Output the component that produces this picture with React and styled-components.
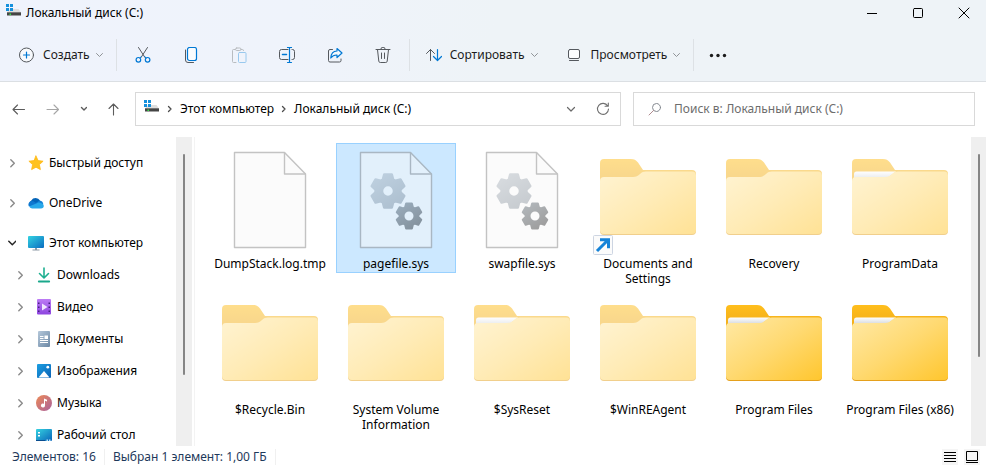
import React, { useState } from "react";
import styled, { createGlobalStyle } from "styled-components";

const GlobalStyle = createGlobalStyle`
  * {
    box-sizing: border-box;
  }
  body {
    margin: 0;
    background: #ffffff;
  }
  body, button, input {
    font-family: "Noto Sans", "Open Sans", sans-serif;
    font-size: 12px;
    line-height: 16px;
    color: #000000;
  }
  button {
    padding: 0;
    border: none;
    background: none;
  }
  svg {
    display: block;
    flex: none;
  }
`;

const Window = styled.div`
  display: flex;
  flex-direction: column;
  height: 100vh;
  overflow: hidden;
`;

const Header = styled.header`
  flex: none;
  background: linear-gradient(100deg, #eff3fc 0%, #eff3fb 30%, #eef3f7 50%);
  border-bottom: 1px solid #dbdfe3;
`;

const TitleBar = styled.div`
  display: flex;
  align-items: center;
  height: 26px;
  padding-left: 6px;
`;

const Title = styled.h1`
  flex: 1;
  margin: 0 0 0 4px;
  font-size: 12px;
  font-weight: 400;
  line-height: 16px;
`;

const WindowButton = styled.button`
  display: flex;
  justify-content: center;
  align-items: center;
  width: 46px;
  height: 24px;
  padding-left: 2px;
`;

const Toolbar = styled.div`
  display: flex;
  align-items: center;
  padding: 13px 0 10px;
`;

const MenuButton = styled.button`
  display: flex;
  align-items: center;
  height: 32px;
  padding: 0 13px 0 16px;
  gap: 6px;
  color: #1b1b1b;
`;

const MenuIcon = styled.span`
  margin-right: 2px;
`;

const ToolButton = styled.button`
  display: flex;
  justify-content: center;
  align-items: center;
  width: 48px;
  height: 32px;
`;

const ToolGroup = styled.div`
  display: flex;
  padding: 0 2px;
`;

const Separator = styled.div`
  width: 1px;
  height: 32px;
  background: #dde1e5;
`;

const NavRow = styled.div`
  display: grid;
  flex: none;
  grid-template-columns: 135px minmax(0, 27fr) 12px minmax(0, 19fr);
  align-items: center;
  padding: 10px 11px 11px 0;
`;

const NavButtons = styled.div`
  display: flex;
  justify-content: space-between;
  align-items: center;
  padding: 0 15px 0 12px;
`;

const NavButton = styled.button`
  display: flex;
  justify-content: center;
  align-items: center;
  height: 32px;
`;

const AddressBar = styled.div`
  display: flex;
  align-items: center;
  height: 34px;
  padding: 0 10px 0 8px;
  border: 1px solid #d9d9d9;
`;

const Crumbs = styled.div`
  display: flex;
  flex: 1;
  align-items: center;
  gap: 7px;
`;

const AddressButton = styled.button`
  display: flex;
  margin-left: 20px;
`;

const SearchBox = styled.label`
  display: flex;
  grid-column: 4;
  align-items: center;
  height: 34px;
  padding: 0 14px;
  gap: 12px;
  border: 1px solid #d9d9d9;
`;

const SearchInput = styled.input`
  flex: 1;
  min-width: 0;
  padding: 0;
  border: none;
  outline: none;
  background: none;
  &::placeholder {
    color: #6d6d6d;
    opacity: 1;
  }
`;

const Content = styled.div`
  display: flex;
  flex: 1;
  min-height: 0;
`;

const Sidebar = styled.nav`
  display: flex;
  flex: none;
  width: 195px;
  padding-right: 2px;
  border-right: 1px solid #f3f3f3;
`;

const TreeList = styled.ul`
  flex: 1;
  margin: 0;
  padding: 10px 0 0;
  overflow: hidden;
  list-style: none;
`;

const TreeItem = styled.li`
  margin-bottom: ${(props) => (props.$spaced ? "8px" : "0")};
`;

const TreeButton = styled.button`
  display: flex;
  align-items: center;
  width: 100%;
  height: 32px;
  padding-left: ${(props) => (props.$nested ? "16px" : "8px")};
`;

const TreeIcon = styled.span`
  margin: 0 5px 0 12px;
`;

const ScrollTrack = styled.div`
  flex: none;
  width: ${(props) => props.$width};
  padding: 17px 7px 0;
  background: #efefef;
`;

const ScrollThumb = styled.div`
  width: 2px;
  height: ${(props) => props.$length};
  border-radius: 1px;
  background: #858585;
`;

const FileGrid = styled.main`
  display: grid;
  flex: 1;
  grid-template-columns: repeat(auto-fill, 120px);
  grid-auto-rows: 146px;
  column-gap: 6px;
  align-items: start;
  padding: 6px 0 0 15px;
  overflow: hidden;
`;

const Tile = styled.button`
  display: flex;
  flex-direction: column;
  align-items: center;
  width: 120px;
  padding-bottom: 1px;
  border: 1px solid ${(props) => (props.$selected ? "#99d1ff" : "transparent")};
  background: ${(props) => (props.$selected ? "#cce8ff" : "transparent")};
`;

const TileLabel = styled.span`
  max-width: 112px;
  line-height: 15px;
  text-align: center;
`;

const TileSvg = styled.svg`
  overflow: visible;
`;

const StatusBar = styled.footer`
  display: flex;
  flex: none;
  align-items: center;
  height: 21px;
  padding: 0 6px 0 12px;
  color: #1e395b;
`;

const StatusText = styled.span`
  padding-right: 8px;
  margin-right: 8px;
  border-right: 1px solid #f0f0f0;
`;

const ViewButtons = styled.div`
  display: flex;
  margin-left: auto;
  gap: 6px;
`;

const ViewButton = styled.button`
  background: #f5f5f5;
`;

const DARK = "#55595e";
const BLUE = "#0078d4";

const Icon = ({ width = 16, height = 16, children }) => (
  <svg
    width={width}
    height={height}
    viewBox={`0 0 ${width} ${height}`}
    fill="none"
    strokeLinecap="round"
    strokeLinejoin="round"
    aria-hidden="true"
  >
    {children}
  </svg>
);

const DriveIcon = () => (
  <Icon height={18}>
    <path d="M1 8.500 4 5h8.500l2.500 3.500z" fill="#dedede" />
    <path d="M1 8h14v3.500H1z" fill="#444444" />
    <path d="M1 8h14v1H1z" fill="#777777" />
    <path d="M3.500 9.500h1.500V11H3.500z" fill="#35e04a" />
    <path d="M0 0h3v3H0zM4 0h3v3H4zM0 4h3v3H0zM4 4h3v3H4z" fill="#1590dc" />
  </Icon>
);

const SmallChevron = () => (
  <Icon width={7} height={16}>
    <path d="M.5 6.500l3 3 3-3" stroke="#8f9397" />
  </Icon>
);

const CrumbChevron = () => (
  <Icon width={6} height={16}>
    <path d="M1.500 5.500L4 8l-2.500 2.500" stroke="#4c4c4c" strokeWidth="1.300" />
  </Icon>
);

const TreeChevron = ({ open }) => (
  <Icon width={8} height={16}>
    {open ? (
      <path d="M.8 6.200L4.300 9.700l3.500-3.500" stroke="#262626" strokeWidth="1.500" />
    ) : (
      <path d="M2.800 4.800L6.300 8.300l-3.500 3.500" stroke="#8a8a8a" strokeWidth="1.400" />
    )}
  </Icon>
);

const toolIcons = {
  cut: (
    <Icon>
      <path d="M3.500.5l6.500 10M12.500.5L6 10.500" stroke={DARK} />
      <circle cx="3.400" cy="12.800" r="2.300" stroke={BLUE} strokeWidth="1.200" />
      <circle cx="12.600" cy="12.800" r="2.300" stroke={BLUE} strokeWidth="1.200" />
      <path d="M5 11l1.200-1.500M11 11L9.800 9.500" stroke={BLUE} />
    </Icon>
  ),
  copy: (
    <Icon>
      <path d="M2.500 3v10a2.500 2.500 0 0 0 2.500 2.500h5.500" stroke={DARK} />
      <rect x="4.500" y=".5" width="9" height="13" rx="2" fill="#fafcfe" stroke={BLUE} strokeWidth="1.200" />
    </Icon>
  ),
  paste: (
    <Icon>
      <path d="M4 2.500H2.500a1 1 0 0 0-1 1v11a1 1 0 0 0 1 1H5M10 2.500h1.500a1 1 0 0 1 1 1" stroke="#b9bcc0" />
      <rect x="4.500" y="1" width="5.500" height="2.500" rx="1.200" stroke="#b9bcc0" />
      <rect x="7.500" y="5.500" width="7.500" height="10" rx="1" stroke="#98c8ee" />
    </Icon>
  ),
  rename: (
    <Icon>
      <path d="M9 2.500H2.500a2 2 0 0 0-2 2v6a2 2 0 0 0 2 2H9M13 2.500h.5a2 2 0 0 1 2 2v6a2 2 0 0 1-2 2H13" stroke={DARK} />
      <path d="M3.500 7.500h4" stroke={BLUE} strokeWidth="1.500" />
      <path d="M10.500.5v15M8.500.5h4M8.500 15.500h4" stroke={BLUE} strokeWidth="1.200" />
    </Icon>
  ),
  share: (
    <Icon>
      <path d="M5.500 2.500H3a1.500 1.500 0 0 0-1.500 1.500v9.500A1.500 1.500 0 0 0 3 15h9.500a1.500 1.500 0 0 0 1.500-1.500V12" stroke={DARK} />
      <path d="M10 1.500l5 4.500-5 4.500V8C7.500 7.800 5.500 8.800 3.800 11 4 7 6.500 4.200 10 4z" fill="#f4f9fd" stroke={BLUE} strokeWidth="1.200" />
    </Icon>
  ),
  remove: (
    <Icon>
      <path d="M1 2.500h14M5.800 2.200a2.200 2 0 0 1 4.400 0M2.500 2.700l1.300 11.500a1.500 1.500 0 0 0 1.500 1.300h5.400a1.500 1.500 0 0 0 1.500-1.300l1.300-11.500M6.500 6v5.500M9.500 6v5.500" stroke={DARK} />
    </Icon>
  ),
};

const treeIcons = {
  star: (
    <Icon>
      <path d="M8 1l2.100 4.600 5 .6-3.700 3.400 1 5L8 12.200 3.600 14.600l1-5L.9 6.200l5-.6z" fill="#ffc220" stroke="#ffb814" strokeWidth=".8" />
    </Icon>
  ),
  cloud: (
    <Icon>
      <path d="M4 12.500A3.800 3.800 0 0 1 3.300 5.500 5 5 0 0 1 12 5.600L8.500 10z" fill="#0464b8" />
      <path d="M7 8.500l4.600-3a4.200 4.200 0 0 1 3.700 4l-5.300-.5z" fill="#1180d6" />
      <path d="M.8 11.300A3.700 3.700 0 0 1 6.500 6.900l6.500 4z" fill="#0f78d0" />
      <path d="M1 11.600l8.500-3.700c1.200-.6 2.300-.5 3.200.2A3.200 3.200 0 0 1 15.800 10.800 2.800 2.800 0 0 1 13 13.500H4A3.700 3.700 0 0 1 1 11.600z" fill="#28a8ea" />
    </Icon>
  ),
  computer: (
    <Icon>
      <defs>
        <linearGradient id="screen" x1="0" y1="0" x2="1" y2="1">
          <stop offset="0" stopColor="#33d3e2" />
          <stop offset="1" stopColor="#0b6cc0" />
        </linearGradient>
      </defs>
      <path d="M7 13h2v2H7zM4.500 14.500h7v1h-7z" fill="#8d9aa5" />
      <rect x="0" y="1" width="16" height="12" rx="1" fill="url(#screen)" />
    </Icon>
  ),
  downloads: (
    <Icon>
      <path d="M8 1v9.500M3.500 6.500L8 11l4.500-4.500" stroke="#1fb091" strokeWidth="1.600" />
      <path d="M2.800 14.500h10.400" stroke="#1aa88b" strokeWidth="1.800" />
    </Icon>
  ),
  video: (
    <Icon>
      <defs>
        <linearGradient id="film" x1="0" y1="0" x2="0" y2="1">
          <stop offset="0" stopColor="#bd7cf5" />
          <stop offset="1" stopColor="#8d45df" />
        </linearGradient>
      </defs>
      <rect x="1" y="0" width="14" height="15.500" rx="1" fill="url(#film)" />
      <path d="M2 3.500h1.500V5H2zM2 7.500h1.500V9H2zM2 11.500h1.500V13H2zM12.500 3.500H14V5h-1.500zM12.500 7.500H14V9h-1.500zM12.500 11.500H14V13h-1.500z" fill="#45207e" />
      <path d="M6 4.500l5.500 3.500L6 11.500z" fill="#f1e6ff" />
    </Icon>
  ),
  documents: (
    <Icon>
      <defs>
        <linearGradient id="sheet" x1="0" y1="0" x2="1" y2="1">
          <stop offset="0" stopColor="#b5c8da" />
          <stop offset="1" stopColor="#6c88a5" />
        </linearGradient>
      </defs>
      <rect x="2" y="0" width="12" height="16" rx="1" fill="url(#sheet)" />
      <path d="M4 5.500h3.500M4 7.500h3.500M4 9.500h8M4 11.500h8" stroke="#ffffff" strokeLinecap="butt" />
      <path d="M8.500 4.500H12V8H8.500z" fill="#ffffff" />
    </Icon>
  ),
  pictures: (
    <Icon>
      <defs>
        <linearGradient id="sky" x1="0" y1="0" x2="1" y2="1">
          <stop offset="0" stopColor="#1c9fe2" />
          <stop offset="1" stopColor="#0b62b5" />
        </linearGradient>
      </defs>
      <rect x="1" y="1" width="14" height="14" rx="1" fill="url(#sky)" />
      <path d="M2.500 14.500l5.500-6.500 5.500 6.500z" fill="#ffffff" />
      <circle cx="11.800" cy="4.200" r="1.400" fill="#ffffff" />
    </Icon>
  ),
  music: (
    <Icon>
      <defs>
        <linearGradient id="note" x1="0" y1="0" x2="1" y2="1">
          <stop offset="0" stopColor="#ed8a55" />
          <stop offset="1" stopColor="#a9619e" />
        </linearGradient>
      </defs>
      <circle cx="8" cy="8" r="8" fill="url(#note)" />
      <path d="M8 3.500l3 1.200v1.800L9 5.800V10.500a2 2 0 1 1-1-1.700z" fill="#ffffff" />
    </Icon>
  ),
  desktop: (
    <Icon>
      <defs>
        <linearGradient id="desk" x1="0" y1="0" x2="1" y2="1">
          <stop offset="0" stopColor="#35d2e0" />
          <stop offset="1" stopColor="#0a65ba" />
        </linearGradient>
      </defs>
      <rect x="0" y="2" width="16" height="12" rx="1" fill="url(#desk)" />
      <path d="M2 5h2v1.500H2zM2 8h2v1.500H2z" fill="#ffffff" />
      <path d="M0 13h9v1H0z" fill="#0a4d8e" />
      <path d="M10.500 12.500H12V14h-1.500zM13 12.500h1.500V14H13z" fill="#bfe4fa" />
    </Icon>
  ),
};

// six-tooth gear with a round hole in the middle
const gearPath = (cx, cy, radius, hole) => {
  const points = [];
  for (let i = 0; i < 6; i++) {
    [
      [-24, 0.74],
      [-13, 1],
      [13, 1],
      [24, 0.74],
    ].forEach(([offset, scale]) => {
      const angle = ((i * 60 - 90 + offset) * Math.PI) / 180;
      const x = cx + Math.cos(angle) * radius * scale;
      const y = cy + Math.sin(angle) * radius * scale;
      points.push(`${x.toFixed(2)} ${y.toFixed(2)}`);
    });
  }
  return `M${points.join("L")}ZM${cx - hole} ${cy}a${hole} ${hole} 0 1 0 ${hole * 2} 0a${hole} ${hole} 0 1 0 ${-hole * 2} 0Z`;
};

const FileIcon = ({ gears }) => (
  <TileSvg width="96" height="112" viewBox="0 0 96 112" fill="none" aria-hidden="true">
    <defs>
      <linearGradient id="gearLight" x1="0" y1="0" x2="0.600" y2="1">
        <stop offset="0" stopColor="#b3bbc3" />
        <stop offset="1" stopColor="#929ba4" />
      </linearGradient>
      <linearGradient id="gearDark" x1="0" y1="0" x2="0.600" y2="1">
        <stop offset="0" stopColor="#6a767f" />
        <stop offset="1" stopColor="#414141" />
      </linearGradient>
    </defs>
    <g opacity="0.500" strokeLinejoin="round">
      <path d="M12.500 8.500h50l21 21.500v73.500h-71z" fill="#f9f9f9" stroke="#888888" strokeWidth="1.400" />
      <path d="M62.500 8.500V30h21" stroke="#888888" strokeWidth="1.400" />
      {gears && (
        <>
          <path d={gearPath(40, 47, 17, 6)} fill="url(#gearLight)" stroke="url(#gearLight)" strokeWidth="2.500" fillRule="evenodd" />
          <path d={gearPath(61, 72, 12.8, 5.5)} fill="url(#gearDark)" stroke="url(#gearDark)" strokeWidth="2" fillRule="evenodd" />
        </>
      )}
    </g>
  </TileSvg>
);

const FolderIcon = ({ faded, filled, shortcut }) => (
  <TileSvg width="96" height="112" viewBox="0 0 96 112" fill="none" aria-hidden="true">
    <defs>
      <linearGradient id="folderFront" x1="0" y1="0" x2="1" y2="1">
        <stop offset="0" stopColor="#ffe9a6" />
        <stop offset="0.500" stopColor="#ffd970" />
        <stop offset="1" stopColor="#ffc62e" />
      </linearGradient>
      <linearGradient id="folderBack" x1="0" y1="0" x2="0" y2="1">
        <stop offset="0" stopColor="#ffbe1c" />
        <stop offset="0.200" stopColor="#f5b21c" />
        <stop offset="1" stopColor="#e5a01c" />
      </linearGradient>
      <linearGradient id="folderPaper" x1="0" y1="0" x2="0" y2="1">
        <stop offset="0" stopColor="#ffffff" />
        <stop offset="1" stopColor="#cfd3d8" />
      </linearGradient>
    </defs>
    <g opacity={faded ? 0.5 : 1}>
      <path d="M0 19a4 4 0 0 1 4-4h27c3 0 5 1 7 3.500l5 7.500h49a4 4 0 0 1 4 4v57a4 4 0 0 1-4 4H4a4 4 0 0 1-4-4z" fill="url(#folderBack)" />
      {filled && <path d="M2 35v-5q0-2.500 2.500-2.500H44L34 35z" fill="url(#folderPaper)" />}
      <path d="M0 37a4 4 0 0 1 4-4h29c3 0 5-1 7-3 2-1.800 3.500-2.500 6-2.500h46a4 4 0 0 1 4 4V86a4 4 0 0 1-4 4H4a4 4 0 0 1-4-4z" fill="url(#folderFront)" />
    </g>
    {shortcut && (
      <g>
        <rect x="-6.500" y="91.500" width="19" height="19" rx="1" fill="#fbfbfb" stroke="#cdd5e2" />
        <path d="M-3 107L7.500 96.500M0 95.800h8.500v8.500" stroke="#1583d8" strokeWidth="3" />
      </g>
    )}
  </TileSvg>
);

const treeItems = [
  { label: "Быстрый доступ", icon: "star", spaced: true },
  { label: "OneDrive", icon: "cloud", spaced: true },
  { label: "Этот компьютер", icon: "computer", open: true },
  { label: "Downloads", icon: "downloads", nested: true },
  { label: "Видео", icon: "video", nested: true },
  { label: "Документы", icon: "documents", nested: true },
  { label: "Изображения", icon: "pictures", nested: true },
  { label: "Музыка", icon: "music", nested: true },
  { label: "Рабочий стол", icon: "desktop", nested: true },
];

const files = [
  { name: "DumpStack.log.tmp", type: "file" },
  { name: "pagefile.sys", type: "file", gears: true },
  { name: "swapfile.sys", type: "file", gears: true },
  { name: "Documents and Settings", faded: true, shortcut: true },
  { name: "Recovery", faded: true },
  { name: "ProgramData", faded: true, filled: true },
  { name: "$Recycle.Bin", faded: true },
  { name: "System Volume Information", faded: true },
  { name: "$SysReset", faded: true, filled: true },
  { name: "$WinREAgent", faded: true },
  { name: "Program Files", filled: true },
  { name: "Program Files (x86)", filled: true },
];

const tools = [
  { id: "cut", label: "Вырезать" },
  { id: "copy", label: "Копировать" },
  { id: "paste", label: "Вставить" },
  { id: "rename", label: "Переименовать" },
  { id: "share", label: "Поделиться" },
  { id: "remove", label: "Удалить" },
];

const HeaderComponent = () => (
  <Header>
    <TitleBar>
      <DriveIcon />
      <Title>Локальный диск (C:)</Title>
      <WindowButton aria-label="Свернуть">
        <Icon width={12} height={12}>
          <path d="M1 6.500h10" stroke="#000000" strokeLinecap="butt" />
        </Icon>
      </WindowButton>
      <WindowButton aria-label="Развернуть">
        <Icon width={12} height={12}>
          <rect x="1.500" y="1.500" width="9" height="9" rx="1" stroke="#000000" />
        </Icon>
      </WindowButton>
      <WindowButton aria-label="Закрыть">
        <Icon width={12} height={12}>
          <path d="M1 1l10 10M11 1L1 11" stroke="#000000" />
        </Icon>
      </WindowButton>
    </TitleBar>
    <Toolbar>
      <MenuButton>
        <MenuIcon>
          <Icon width={19}>
            <circle cx="10.500" cy="8" r="7" stroke={DARK} fill="#f8fafd" />
            <path d="M7.500 8h6M10.500 5v6" stroke={BLUE} strokeWidth="1.200" />
          </Icon>
        </MenuIcon>
        Создать
        <SmallChevron />
      </MenuButton>
      <Separator />
      <ToolGroup>
        {tools.map((tool) => (
          <ToolButton key={tool.id} aria-label={tool.label}>
            {toolIcons[tool.id]}
          </ToolButton>
        ))}
      </ToolGroup>
      <Separator />
      <MenuButton>
        <MenuIcon>
          <Icon>
            <path d="M4.500 13.500v-11M.5 6.500l4-4 4 4" stroke={DARK} />
            <path d="M11.500 2.500v11M7.500 9.500l4 4 4-4" stroke={BLUE} strokeWidth="1.200" />
          </Icon>
        </MenuIcon>
        Сортировать
        <SmallChevron />
      </MenuButton>
      <MenuButton>
        <MenuIcon>
          <Icon>
            <rect x="1.500" y="2.500" width="11" height="9" rx="1.500" fill="#fafcfe" stroke={DARK} />
            <path d="M2.500 13.500h9" stroke={DARK} />
          </Icon>
        </MenuIcon>
        Просмотреть
        <SmallChevron />
      </MenuButton>
      <Separator />
      <ToolButton aria-label="Подробнее">
        <Icon width={18}>
          <g fill="#1b1b1b">
            <circle cx="2.500" cy="8.500" r="1.700" />
            <circle cx="9" cy="8.500" r="1.700" />
            <circle cx="15.500" cy="8.500" r="1.700" />
          </g>
        </Icon>
      </ToolButton>
    </Toolbar>
  </Header>
);

const NavigationComponent = () => {
  const [query, setQuery] = useState("");

  return (
    <NavRow>
      <NavButtons>
        <NavButton aria-label="Назад">
          <Icon width={14} height={14}>
            <path d="M12.500 7.500H1M5.500 3L1 7.500 5.500 12" stroke="#5c5c5c" strokeWidth="1.100" />
          </Icon>
        </NavButton>
        <NavButton aria-label="Вперед">
          <Icon width={14} height={14}>
            <path d="M2 7.500h11.500M9 3l4.500 4.500L9 12" stroke="#a6a6a6" strokeWidth="1.100" />
          </Icon>
        </NavButton>
        <NavButton aria-label="Последние расположения">
          <Icon width={8} height={14}>
            <path d="M2.500 5.500L5 8l2.500-2.500" stroke="#5c5c5c" strokeWidth="1.400" />
          </Icon>
        </NavButton>
        <NavButton aria-label="Вверх">
          <Icon width={14} height={14}>
            <path d="M7.500 13V2M3 6.500L7.500 2 12 6.500" stroke="#5c5c5c" strokeWidth="1.100" />
          </Icon>
        </NavButton>
      </NavButtons>
      <AddressBar>
        <Crumbs>
          <DriveIcon />
          <CrumbChevron />
          <button>Этот компьютер</button>
          <CrumbChevron />
          <button>Локальный диск (C:)</button>
        </Crumbs>
        <AddressButton aria-label="Предыдущие расположения">
          <Icon width={10} height={14}>
            <path d="M1.500 5.500L5 9l3.500-3.500" stroke="#6a6a6a" strokeWidth="1.200" />
          </Icon>
        </AddressButton>
        <AddressButton aria-label="Обновить">
          <Icon width={14} height={14}>
            <path d="M11.700 4A5.500 5.500 0 1 0 12.500 7M12.300 1v3.200H9.100" stroke="#707070" strokeWidth="1.100" />
          </Icon>
        </AddressButton>
      </AddressBar>
      <SearchBox>
        <Icon width={14} height={14}>
          <circle cx="8.500" cy="5.500" r="4" stroke="#858a91" />
          <path d="M5.500 8.500l-4.500 4.500" stroke="#b08a8e" />
        </Icon>
        <SearchInput
          aria-label="Поиск"
          placeholder="Поиск в: Локальный диск (C:)"
          value={query}
          onChange={(e) => setQuery(e.target.value)}
        />
      </SearchBox>
    </NavRow>
  );
};

const SidebarComponent = () => (
  <Sidebar>
    <TreeList>
      {treeItems.map((item) => (
        <TreeItem key={item.label} $spaced={item.spaced}>
          <TreeButton $nested={item.nested} aria-expanded={!!item.open}>
            <TreeChevron open={item.open} />
            <TreeIcon>{treeIcons[item.icon]}</TreeIcon>
            {item.label}
          </TreeButton>
        </TreeItem>
      ))}
    </TreeList>
    <ScrollTrack $width="16px">
      <ScrollThumb $length="221px" />
    </ScrollTrack>
  </Sidebar>
);

const App = () => {
  const [selected, setSelected] = useState("pagefile.sys");

  return (
    <Window>
      <GlobalStyle />
      <HeaderComponent />
      <NavigationComponent />
      <Content>
        <SidebarComponent />
        <FileGrid>
          {files.map((file) => (
            <Tile
              key={file.name}
              $selected={file.name === selected}
              aria-pressed={file.name === selected}
              onClick={() => setSelected(file.name)}
            >
              {file.type === "file" ? (
                <FileIcon gears={file.gears} />
              ) : (
                <FolderIcon faded={file.faded} filled={file.filled} shortcut={file.shortcut} />
              )}
              <TileLabel>{file.name}</TileLabel>
            </Tile>
          ))}
        </FileGrid>
        <ScrollTrack $width="15px">
          <ScrollThumb $length="203px" />
        </ScrollTrack>
      </Content>
      <StatusBar>
        <StatusText>Элементов: 16</StatusText>
        <StatusText>Выбран 1 элемент: 1,00 ГБ</StatusText>
        <ViewButtons>
          <ViewButton aria-label="Таблица">
            <Icon>
              <path d="M2 3.500h12M2 6.500h12M2 9.500h12M2 12.500h12" stroke="#000000" strokeLinecap="butt" />
            </Icon>
          </ViewButton>
          <ViewButton aria-label="Крупные значки">
            <Icon>
              <path d="M2.500 2.500h11v9h-11zM2 13.500h12" stroke="#000000" strokeLinecap="butt" strokeLinejoin="miter" />
            </Icon>
          </ViewButton>
        </ViewButtons>
      </StatusBar>
    </Window>
  );
};

export default App;
